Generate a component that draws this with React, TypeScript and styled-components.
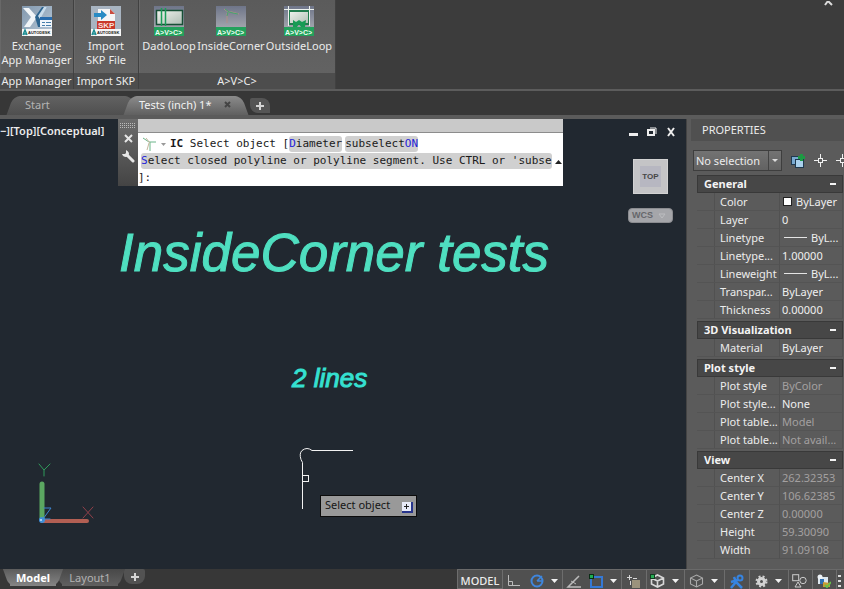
import React from "react";
import styled, { createGlobalStyle, css } from "styled-components";

const GlobalStyle = createGlobalStyle`
  * { box-sizing: border-box; }
  body { margin: 0; background: #373737; overflow: hidden; }
  button, select { font: inherit; color: inherit; margin: 0; }
  button { border: 0; padding: 0; background: none; }
`;

const Shell = styled.div`
  display: flex;
  flex-direction: column;
  height: 100vh;
  font: 11px/14px "Noto Sans", "Open Sans", sans-serif;
  color: #ececec;
  background: #373737;
`;

/* Ribbon */
const Ribbon = styled.header`
  display: flex;
  justify-content: space-between;
  flex: none;
  height: 91px;
  background: #3c3c3c;
  border-bottom: 2px solid #5c5c5c;
`;
const Panels = styled.div`
  display: flex;
`;
const RibbonPanel = styled.section`
  display: flex;
  flex-direction: column;
  background: linear-gradient(#5b5b5b, #646464);
  border-right: 1px solid #414141;
  box-shadow: inset 1px 0 #686868;
`;
const Tools = styled.div<{ $gap: number }>`
  display: flex;
  flex: 1;
  gap: ${(p) => p.$gap}px;
  padding: 6px 3px 0;
  justify-content: center;
`;
const Tool = styled.button<{ $width: number }>`
  display: flex;
  flex-direction: column;
  align-items: center;
  gap: 3px;
  width: ${(p) => p.$width}px;
  white-space: pre;
  svg { flex: none; }
`;
const PanelTitle = styled.h2`
  margin: 0;
  height: 16px;
  font: inherit;
  line-height: 16px;
  text-align: center;
  background: #4d4d4d;
`;
const CloseRibbon = styled.button`
  align-self: flex-start;
  width: 32px;
  height: 6px;
  svg { display: block; margin: 0 auto; }
`;

/* File tabs */
const FileTabs = styled.nav`
  display: flex;
  flex: none;
  align-items: flex-end;
  height: 28px;
  padding-left: 14px;
  border-bottom: 4px solid #5b5b5b;
  background: #373737;
`;
const fileShape = css`
  &::before, &::after {
    content: "";
    position: absolute;
    z-index: -1;
    top: 0;
    bottom: 0;
    background: inherit;
  }
  &::before { left: -4px; width: 20px; transform: skewX(-20deg); border-radius: 7px 0 0 0; }
  &::after { right: -4px; width: 20px; transform: skewX(20deg); border-radius: 0 7px 0 0; }
`;
const FileTab = styled.div<{ $active?: boolean; $width: number }>`
  position: relative;
  z-index: ${(p) => (p.$active ? 1 : 0)};
  display: flex;
  align-items: center;
  justify-content: space-between;
  width: ${(p) => p.$width}px;
  height: 19px;
  padding: 0 10px 2px ${(p) => (p.$active ? 8 : 11)}px;
  border-radius: 8px 8px 0 0;
  color: ${(p) => (p.$active ? "#f2f2f2" : "#b4b4b4")};
  background: ${(p) => (p.$active ? "linear-gradient(#8b8b8b, #606060)" : "linear-gradient(#626262, #4f4f4f)")};
  ${fileShape}
  svg { display: block; }
`;
const NewFile = styled.button`
  width: 20px;
  height: 15px;
  margin-left: 9px;
  margin-bottom: 2px;
  border-radius: 2px 8px 0 8px;
  background: #555;
  display: grid;
  place-items: center;
`;

/* Workspace */
const Workspace = styled.main`
  display: flex;
  flex: 1;
  min-height: 0;
`;
const Canvas = styled.section`
  position: relative;
  flex: 1;
  overflow: hidden;
  background: #212830;
`;
const ViewLabel = styled.button`
  position: absolute;
  left: 0;
  top: 5px;
  font-weight: 600;
  white-space: nowrap;
`;
const Heading = styled.h1<{ $x: number; $y: number; $size: number; $color: string }>`
  position: absolute;
  left: ${(p) => p.$x}px;
  top: ${(p) => p.$y}px;
  margin: 0;
  font: italic ${(p) => p.$size}px/1 "Liberation Sans", Arial, sans-serif;
  color: ${(p) => p.$color};
  -webkit-text-stroke: 1px ${(p) => p.$color};
  white-space: nowrap;
`;
const Geometry = styled.svg<{ $x: number; $y: number }>`
  position: absolute;
  left: ${(p) => p.$x}px;
  top: ${(p) => p.$y}px;
`;
const Prompt = styled.div`
  position: absolute;
  left: 320px;
  top: 376px;
  display: flex;
  align-items: center;
  justify-content: space-between;
  width: 97px;
  height: 22px;
  padding: 0 3px 3px 4px;
  border: 1px solid #0c0c0c;
  background: #999;
  color: #161616;
  svg { margin-top: 5px; }
`;
const WindowButtons = styled.div`
  position: absolute;
  top: 8px;
  right: 10px;
  display: flex;
  gap: 9px;
  svg { display: block; }
`;
const ViewCube = styled.button`
  position: absolute;
  right: 18px;
  top: 40px;
  width: 35px;
  height: 35px;
  padding: 6px;
  background: #c4c4c6;
  border: 1px solid #d2d2d2;
  span {
    display: block;
    background: #b7b7c1;
    font: bold 8px/21px "Liberation Sans", sans-serif;
    color: #474747;
  }
`;
const Wcs = styled.button`
  position: absolute;
  right: 13px;
  top: 89px;
  display: flex;
  align-items: center;
  gap: 5px;
  width: 45px;
  height: 15px;
  padding: 0 3px;
  border-radius: 4px;
  border: 1px solid #8b8c90;
  background: #a5a6aa;
  color: #66676b;
  font: bold 9px/13px "Liberation Sans", sans-serif;
`;

/* Command line */
const Command = styled.section`
  position: absolute;
  left: 118px;
  right: 123px;
  top: 0;
  display: flex;
  height: 67px;
  background: #fff;
  color: #1a1a1a;
  font: 11px/18px "DejaVu Sans Mono", monospace;
`;
const Grip = styled.div`
  display: flex;
  flex-direction: column;
  align-items: center;
  gap: 6px;
  width: 20px;
  padding-top: 4px;
  background: linear-gradient(#6d6d6d, #444);
  svg { display: block; }
`;
const CommandBody = styled.div`
  flex: 1;
  min-width: 0;
`;
const CommandTitle = styled.div`
  height: 14px;
  margin-bottom: 2px;
  background: #c9c9c9;
  border-bottom: 1px solid #8c8c8c;
`;
const CommandLine = styled.div`
  display: flex;
  align-items: center;
  height: 17px;
  white-space: pre;
`;
const Option = styled.button`
  height: 16px;
  line-height: 16px;
  margin-right: 3px;
  border-radius: 3px;
  background: #d0d0d0;
  white-space: pre;
`;
const Key = styled.span`
  color: #2424d8;
`;
const CommandIcon = styled.button`
  display: flex;
  width: 32px;
  padding-left: 4px;
`;
const LineStart = styled.span`
  padding-left: 3px;
`;

/* Properties palette */
const Palette = styled.aside`
  flex: none;
  width: 158px;
  padding-left: 4px;
  overflow: hidden;
  background: #5b5b5b;
  border-left: 1px solid #444;
`;
const PaletteTitle = styled.h2`
  margin: 0;
  padding: 2px 11px 0;
  height: 22px;
  font: inherit;
  line-height: 17px;
  background: #505050;
`;
const PaletteTools = styled.div`
  display: flex;
  align-items: center;
  gap: 9px;
  height: 34px;
  padding: 9px 0 4px 2px;
  svg { display: block; flex: none; }
`;
const Picker = styled.label`
  position: relative;
  display: block;
  flex: none;
  width: 89px;
  height: 21px;
  border: 1px solid #3e3e3e;
  background: linear-gradient(#737373, #626262);
  select {
    width: 100%;
    height: 19px;
    padding: 0 2px;
    border: 0;
    appearance: none;
    background: none;
  }
  svg {
    position: absolute;
    right: 0;
    top: 0;
    pointer-events: none;
  }
`;
const Group = styled.section`
  margin: 0 1px 2px 6px;
`;
const GroupHeader = styled.button`
  display: flex;
  align-items: center;
  justify-content: space-between;
  width: 100%;
  height: 18px;
  padding: 0 6px;
  border: 1px solid #393939;
  background: #474747;
  font-weight: 700;
  color: #f4f4f4;
`;
const Props = styled.table`
  width: 100%;
  table-layout: fixed;
  border-spacing: 0;
  th, td {
    height: 18px;
    padding: 0 0 0 2px;
    border-bottom: 1px solid #545454;
    border-right: 1px solid #515151;
    font-weight: 400;
    text-align: left;
    line-height: 16px;
    white-space: nowrap;
    overflow: hidden;
  }
  th { width: 83px; padding-left: 23px; background: linear-gradient(90deg, #5b5b5b 17px, #515151 17px, #515151 18px, #5b5b5b 18px); }
`;
const Value = styled.span<{ $dim?: boolean }>`
  display: flex;
  align-items: center;
  gap: 4px;
  color: ${(p) => (p.$dim ? "#a3a0a0" : "#efefef")};
`;
const Swatch = styled.i`
  width: 9px;
  height: 9px;
  margin-left: 1px;
  background: #fff;
  border: 1px solid #222;
`;
const Stroke = styled.i`
  width: 23px;
  margin-left: 2px;
  border-top: 1px solid #e4e4e4;
`;

/* Bottom bar */
const Bottom = styled.footer`
  display: flex;
  flex: none;
  justify-content: space-between;
  height: 20px;
  overflow: hidden;
  background: #373737;
`;
const Layouts = styled.nav`
  display: flex;
  align-items: flex-start;
  padding-left: 10px;
`;
const LayoutTab = styled.button<{ $active?: boolean; $width: number }>`
  position: relative;
  z-index: ${(p) => (p.$active ? 1 : 0)};
  width: ${(p) => p.$width}px;
  height: 17px;
  margin-right: 6px;
  line-height: 16px;
  font-weight: ${(p) => (p.$active ? 700 : 400)};
  color: ${(p) => (p.$active ? "#fff" : "#b2b2b2")};
  background: ${(p) => (p.$active ? "linear-gradient(#5c5c5c, #858585)" : "linear-gradient(#484848, #606060)")};
  &::before, &::after {
    content: "";
    position: absolute;
    z-index: -1;
    top: 0;
    bottom: 0;
    width: 12px;
    background: inherit;
  }
  &::before { left: -4px; transform: skewX(20deg); border-radius: 0 0 0 6px; }
  &::after { right: -4px; transform: skewX(-20deg); border-radius: 0 0 6px 0; }
`;
const AddLayout = styled.button`
  display: grid;
  place-items: center;
  width: 21px;
  height: 15px;
  border-radius: 0 2px 8px 8px;
  background: #525252;
`;
const Status = styled.div`
  display: flex;
  background: #505050;
  border-top: 1px solid #6a6a6a;
`;
const StatusButton = styled.button<{ $width: number; $divide?: boolean }>`
  display: flex;
  align-items: center;
  justify-content: center;
  gap: 7px;
  width: ${(p) => p.$width}px;
  height: 19px;
  padding: 3px 2px 0 0;
  border-right: 1px solid ${(p) => (p.$divide ? "#6d6d6d" : "transparent")};
  svg { flex: none; }
`;
const ModelButton = styled(StatusButton)`
  padding-right: 0;
  font-weight: 500;
  border: 1px solid #6d6d6d;
  border-top: 0;
`;

const Svg = ({ w, h, children }: { w: number; h: number; children: React.ReactNode }) => (
  <svg width={w} height={h} viewBox={`0 0 ${w} ${h}`} fill="none" aria-hidden="true">{children}</svg>
);
const Caret = () => <Svg w={7} h={4}><path d="M0 0h7L3.500 4z" fill="#f2f2f2" /></Svg>;
const Plus = () => <Svg w={8} h={8}><path d="M4 0v8M0 4h8" stroke="#d5d5d5" strokeWidth="2" /></Svg>;
const Target = () => (
  <Svg w={13} h={13}><path d="M6.500 0v4M6.500 9v4M0 6.500h4M9 6.500h4" stroke="#f0f0f0" /><rect x="4.500" y="4.500" width="4" height="4" stroke="#f0f0f0" /></Svg>
);

const Autodesk = () => (
  <>
    <rect y="23" width="30" height="7" fill="#f7f7f7" />
    <path d="M1 29l2-5 2 5M2 28h3" stroke="#1c8c92" strokeWidth="1.500" />
    <text x="6" y="28" fontSize="4" fontWeight="700" fontFamily="Liberation Sans" fill="#222">AUTODESK</text>
  </>
);
const ExchangeIcon = () => (
  <Svg w={30} h={30}>
    <defs>
      <linearGradient id="ex" x1="0" y1="0" x2="1" y2="1"><stop stopColor="#8298ae" /><stop offset="1" stopColor="#b9c9d8" /></linearGradient>
    </defs>
    <rect width="30" height="30" fill="url(#ex)" />
    <path d="M1 2h6l8 9-7 10H2l7-10z" fill="#f1f5f8" />
    <path d="M25 1h-5l-7 10 3 10h6l-4-10z" fill="#2d648f" />
    <path d="M25 1h-3l-6 9 2 3z" fill="#c9dceb" />
    <rect x="18" y="11" width="12" height="10" fill="#f1f6fb" />
    <path d="M18 12.500h12" stroke="#286cae" strokeWidth="3" />
    <path d="M20 16.500h3M24 16.500h5M20 19.500h3M24 19.500h5" stroke="#477fac" />
    <Autodesk />
  </Svg>
);
const SkpIcon = () => (
  <Svg w={30} h={30}>
    <rect width="30" height="30" fill="#a8b4c1" />
    <path d="M7 3h12l5 5v15H7z" fill="#f5f5f5" />
    <path d="M19 3v5h5" fill="#cb4b3e" />
    <path d="M3 7h7V4l6 5-6 5v-3H3z" fill="#288bc4" />
    <rect x="6" y="15" width="18" height="8" fill="#c93729" />
    <text x="7" y="22" fontSize="8" fontWeight="700" fontFamily="Liberation Sans" fill="#f8dfda">SKP</text>
    <Autodesk />
  </Svg>
);
const AvcIcon = ({ id, children }: { id: string; children: React.ReactNode }) => (
  <Svg w={30} h={30}>
    <defs>
      <linearGradient id={id} x1="0" y1="0" x2="0" y2="1"><stop stopColor="#6e7589" /><stop offset="1" stopColor="#a3a5ad" /></linearGradient>
      <linearGradient id={`${id}b`} x1="0" y1="0" x2="1" y2="1"><stop stopColor="#f1f3ee" /><stop offset="1" stopColor="#aebdb3" /></linearGradient>
    </defs>
    <rect width="30" height="22" fill={`url(#${id})`} />
    {children}
    <rect y="21" width="30" height="9" fill="#23a15c" />
    <text x="1" y="28.500" fontSize="7" fontWeight="700" fontFamily="Liberation Sans" fill="#eefff4">A&gt;V&gt;C&gt;</text>
  </Svg>
);
const DadoIcon = () => (
  <AvcIcon id="da">
    <rect x="2.500" y="4.500" width="26" height="14" fill="url(#dab)" stroke="#174f35" strokeWidth="1.500" />
    <path d="M7.500 2v18M11.500 2v18" stroke="#1b9c58" strokeWidth="1.500" />
  </AvcIcon>
);
const InsideIcon = () => (
  <AvcIcon id="in">
    <path d="M8 3l4 3M12 6h4l7 2M11 7v10" stroke="#b08f86" />
    <path d="M9 3l4 3 4 1 5 1M12 6l-1 4" stroke="#46a56e" />
  </AvcIcon>
);
const OutsideIcon = () => (
  <AvcIcon id="ou">
    <rect x="5" y="5" width="20" height="13" fill="url(#oub)" stroke="#227b4d" strokeWidth="2" />
    <path d="M4.500 0v20M25.500 0v20M0 3.500h30" stroke="#edf2ee" />
    <path d="M9 14l3 2 3-2 3 2 4-2-1 7h-4l-2-3-2 3H9z" fill="#179b55" />
  </AvcIcon>
);

type Prop = { name: string; value: string; dim?: boolean; mark?: "swatch" | "stroke" };
const groups: { title: string; rows: Prop[] }[] = [
  { title: "General", rows: [
    { name: "Color", value: "ByLayer", mark: "swatch" },
    { name: "Layer", value: "0" },
    { name: "Linetype", value: "ByL...", mark: "stroke" },
    { name: "Linetype...", value: "1.00000" },
    { name: "Lineweight", value: "ByL...", mark: "stroke" },
    { name: "Transpar...", value: "ByLayer" },
    { name: "Thickness", value: "0.00000" },
  ] },
  { title: "3D Visualization", rows: [{ name: "Material", value: "ByLayer" }] },
  { title: "Plot style", rows: [
    { name: "Plot style", value: "ByColor", dim: true },
    { name: "Plot style...", value: "None" },
    { name: "Plot table...", value: "Model", dim: true },
    { name: "Plot table...", value: "Not avail...", dim: true },
  ] },
  { title: "View", rows: [
    { name: "Center X", value: "262.32353", dim: true },
    { name: "Center Y", value: "106.62385", dim: true },
    { name: "Center Z", value: "0.00000", dim: true },
    { name: "Height", value: "59.30090", dim: true },
    { name: "Width", value: "91.09108", dim: true },
  ] },
];

const Cube = ({ dot }: { dot?: boolean }) => (
  <Svg w={15} h={14}>
    <path d="M7.500 1l6 3v6l-6 3-6-3V4zM1.500 4l6 3 6-3M7.500 7v6" stroke={dot ? "#d8d8d8" : "#a9a9a9"} strokeWidth={dot ? 1.6 : 1.1} />
    {dot && <rect x=".5" y=".5" width="4" height="4" fill="#28ad55" stroke="#123a20" />}
  </Svg>
);

export default function App() {
  return (
    <Shell>
      <GlobalStyle />
      <Ribbon>
        <Panels>
          <RibbonPanel>
            <Tools $gap={0}><Tool $width={67}><ExchangeIcon />{"Exchange\nApp Manager"}</Tool></Tools>
            <PanelTitle>App Manager</PanelTitle>
          </RibbonPanel>
          <RibbonPanel>
            <Tools $gap={0}><Tool $width={58}><SkpIcon />{"Import\nSKP File"}</Tool></Tools>
            <PanelTitle>Import SKP</PanelTitle>
          </RibbonPanel>
          <RibbonPanel>
            <Tools $gap={1}>
              <Tool $width={54}><DadoIcon />DadoLoop</Tool>
              <Tool $width={68}><InsideIcon />InsideCorner</Tool>
              <Tool $width={66}><OutsideIcon />OutsideLoop</Tool>
            </Tools>
            <PanelTitle>A&gt;V&gt;C&gt;</PanelTitle>
          </RibbonPanel>
        </Panels>
        <CloseRibbon aria-label="Close"><Svg w={9} h={5}><path d="M1 4l3-4 4 4" stroke="#ddd" strokeWidth="2" /></Svg></CloseRibbon>
      </Ribbon>

      <FileTabs>
        <FileTab $width={117}>Start</FileTab>
        <FileTab $width={110} $active>
          Tests (inch) 1*
          <button aria-label="Close drawing"><Svg w={7} h={7}><path d="M1 1l5 5M6 1L1 6" stroke="#444" strokeWidth="2" /></Svg></button>
        </FileTab>
        <NewFile aria-label="New drawing"><Plus /></NewFile>
      </FileTabs>

      <Workspace>
        <Canvas>
          <ViewLabel>−][Top][Conceptual]</ViewLabel>
          <Heading $x={119} $y={107} $size={53} $color="#4fdfc0">InsideCorner tests</Heading>
          <Heading as="h2" $x={292} $y={246} $size={26} $color="#35e0d0">2 lines</Heading>

          <Geometry $x={298} $y={328} width="58" height="64" fill="none" stroke="#f2f2f2">
            <path d="M55 3.500H14M14 3.500q-5-4-10 0-3 3-1 9l1.500 3V62" />
            <rect x="4.500" y="28.500" width="6" height="6" />
          </Geometry>
          <Geometry $x={34} $y={342} width="64" height="66" fill="none" strokeLinecap="round">
            <path d="M8 23v35" stroke="#5ba761" strokeWidth="5" />
            <path d="M8 60h45" stroke="#b25f53" strokeWidth="4" />
            <path d="M5 3l5 6 6-6M10 9v6" stroke="#2f9a5b" />
            <path d="M49 46l10 11M59 46L49 57" stroke="#91404a" />
            <path d="M10 47h7l-8 11h7" stroke="#3e86d3" />
            <circle cx="8" cy="59" r="3" fill="#3f8fd8" />
            <circle cx="7" cy="59" r="1" fill="#cde6fa" />
          </Geometry>
          <Prompt>
            Select object
            <Svg w={11} h={11}><rect width="11" height="11" fill="#27348b" /><rect width="9" height="9" fill="#e9ecf8" /><path d="M4.500 2v5M2 4.500h5" stroke="#222" /></Svg>
          </Prompt>

          <WindowButtons>
            <button aria-label="Minimize"><Svg w={10} h={10}><rect x="1" y="6" width="9" height="3" fill="#eee" /></Svg></button>
            <button aria-label="Restore"><Svg w={10} h={10}><path d="M3 1h6v6" stroke="#eee" /><rect x="1" y="3" width="6" height="5" stroke="#eee" strokeWidth="2" /></Svg></button>
            <button aria-label="Close"><Svg w={10} h={10}><path d="M2 1l6 8M8 1L2 9" stroke="#eee" strokeWidth="2" /></Svg></button>
          </WindowButtons>
          <ViewCube><span>TOP</span></ViewCube>
          <Wcs>WCS<Svg w={8} h={6}><path d="M1 1h6L4 5z" stroke="#bcbdc0" /></Svg></Wcs>

          <Command>
            <Grip>
              <Svg w={16} h={5}><path d="M0 .5h16M0 2.500h16M0 4.500h16" stroke="#bbb" strokeDasharray="1 1" /></Svg>
              <button aria-label="Close command line"><Svg w={9} h={9}><path d="M1 1l7 7M8 1L1 8" stroke="#e6e6e6" strokeWidth="2" /></Svg></button>
              <button aria-label="Customize">
                <Svg w={14} h={14}><path d="M6 6l6 6" stroke="#e6e6e6" strokeWidth="3" strokeLinecap="round" /><path d="M5 1v3L4 5H1q1 3 4 3 3-1 3-4Q7 2 5 1z" fill="#e6e6e6" /></Svg>
              </button>
            </Grip>
            <CommandBody>
              <CommandTitle />
              <CommandLine>
                <CommandIcon aria-label="Recent commands">
                  <Svg w={24} h={16}>
                    <path d="M1 2l6 4 7 0M8 6v9" stroke="#6bb58a" /><path d="M4 2l4 5M7 7l-2 7" stroke="#c7b79d" />
                    <path d="M19 7h5l-2.500 3z" fill="#999" />
                  </Svg>
                </CommandIcon>
                <b>IC</b> Select object [
                <Option><Key>D</Key>iameter</Option>
                <Option>subselect<Key>ON</Key></Option>
              </CommandLine>
              <CommandLine>
                <LineStart />
                <Option><Key>S</Key>elect closed polyline or polyline segment. Use CTRL or 'subse</Option>
                <button aria-label="History"><Svg w={7} h={4}><path d="M0 4h7L3.500 0z" fill="#222" /></Svg></button>
              </CommandLine>
              <CommandLine>]:</CommandLine>
            </CommandBody>
          </Command>
        </Canvas>

        <Palette>
          <PaletteTitle>PROPERTIES</PaletteTitle>
          <PaletteTools>
            <Picker aria-label="Selection">
              <select><option>No selection</option></select>
              <Svg w={13} h={19}><path d="M.5 0v19" stroke="#444" /><path d="M4 8h6l-3 3z" fill="#ddd" /></Svg>
            </Picker>
            <button aria-label="Toggle PICKADD">
              <Svg w={14} h={14}>
                <rect x=".5" y="2.500" width="8" height="8" fill="#79a9d0" stroke="#1f394f" />
                <rect x="4.500" y="5.500" width="8" height="8" fill="#a9d0ec" stroke="#1f394f" />
                <path d="M10.500 0v7M7 3.500h7" stroke="#1d9a43" strokeWidth="3" />
              </Svg>
            </button>
            <button aria-label="Select objects"><Target /></button>
            <button aria-label="Quick select"><Target /></button>
          </PaletteTools>
          {groups.map((g) => (
            <Group key={g.title}>
              <GroupHeader>{g.title}<Svg w={6} h={2}><path d="M0 1h6" stroke="#f4f4f4" strokeWidth="2" /></Svg></GroupHeader>
              <Props>
                <tbody>
                  {g.rows.map((r, i) => (
                    <tr key={i}>
                      <th scope="row">{r.name}</th>
                      <td>
                        <Value $dim={r.dim}>
                          {r.mark === "swatch" && <Swatch />}
                          {r.mark === "stroke" && <Stroke />}
                          {r.value}
                        </Value>
                      </td>
                    </tr>
                  ))}
                </tbody>
              </Props>
            </Group>
          ))}
        </Palette>
      </Workspace>

      <Bottom>
        <Layouts>
          <LayoutTab $width={46} $active>Model</LayoutTab>
          <LayoutTab $width={56}>Layout1</LayoutTab>
          <AddLayout aria-label="New layout"><Plus /></AddLayout>
        </Layouts>
        <Status>
          <ModelButton $width={46}>MODEL</ModelButton>
          <StatusButton $width={24} aria-label="Ortho"><Svg w={13} h={12}><path d="M1.500 0v10.500H13M1.500 6.500h4v4" stroke="#bbb" /></Svg></StatusButton>
          <StatusButton $width={36} $divide aria-label="Polar tracking">
            <Svg w={14} h={14}><circle cx="7" cy="7" r="5.500" stroke="#3f86dd" strokeWidth="2" /><path d="M7 7h6M7 7l5-5" stroke="#3f86dd" strokeWidth="1.500" /></Svg><Caret />
          </StatusButton>
          <StatusButton $width={23} aria-label="Snap tracking"><Svg w={15} h={13}><path d="M13 1L2 12h13" stroke="#bbb" strokeWidth="1.500" /><path d="M5 6l5 3" stroke="#bbb" /></Svg></StatusButton>
          <StatusButton $width={36} $divide aria-label="Object snap">
            <Svg w={14} h={14}><rect x="2" y="3" width="11" height="10" stroke="#3579d6" strokeWidth="2" /><rect x=".5" y=".5" width="4" height="4" fill="#1fae50" stroke="#092c15" /></Svg><Caret />
          </StatusButton>
          <StatusButton $width={25} $divide aria-label="Selection cycling"><Svg w={13} h={13}><path d="M2.500 0v5M0 2.500h5M6 3.500h4M3.500 6v4" stroke="#d8d8d8" /><rect x="5" y="5" width="8" height="8" fill="#9b927c" /></Svg></StatusButton>
          <StatusButton $width={38} $divide aria-label="3D object snap"><Cube dot /><Caret /></StatusButton>
          <StatusButton $width={40} $divide aria-label="Dynamic UCS"><Cube /><Caret /></StatusButton>
          <StatusButton $width={25} $divide aria-label="Annotation visibility">
            <Svg w={15} h={15}><circle cx="11" cy="4" r="2.500" stroke="#3684e1" strokeWidth="2" /><path d="M5 3l2 5 6 6M7 8l-5 6M2 8l7-2" stroke="#3684e1" strokeWidth="2.500" /></Svg>
          </StatusButton>
          <StatusButton $width={39} $divide aria-label="Workspace">
            <Svg w={13} h={13}><circle cx="6.500" cy="6.500" r="5" stroke="#d3d3d3" strokeWidth="2" strokeDasharray="2 2" /><circle cx="6.500" cy="6.500" r="3" stroke="#d3d3d3" strokeWidth="3" /></Svg><Caret />
          </StatusButton>
          <StatusButton $width={24} $divide aria-label="Isolate objects">
            <Svg w={15} h={14}><rect x=".7" y=".7" width="6" height="6" stroke="#ccc" /><circle cx="11" cy="6.500" r="3.200" stroke="#ccc" /><path d="M3 13l3-5 3 5z" stroke="#ccc" /></Svg>
          </StatusButton>
          <StatusButton $width={24} $divide aria-label="Graphics performance">
            <Svg w={14} h={14}><rect x="1" y="3" width="10" height="7" fill="#dce7ef" /><circle cx="3" cy="3" r="2.500" fill="#eef3f7" /><path d="M3 5h4v5H3z" fill="#2f6fb2" /><path d="M6 8l7 1v4H6z" fill="#c89b34" /><path d="M8 11l2 2 4-5" stroke="#67c04a" strokeWidth="2" /></Svg>
          </StatusButton>
          <StatusButton $width={7} aria-label="Customization"><Svg w={4} h={13}><path d="M1 1h3M1 6h3M1 11h3" stroke="#ddd" strokeWidth="2" /></Svg></StatusButton>
        </Status>
      </Bottom>
    </Shell>
  );
}
